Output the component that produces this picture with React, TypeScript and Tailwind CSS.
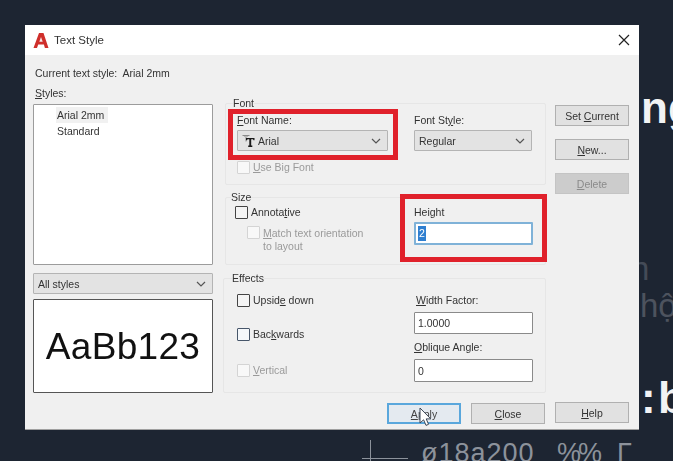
import React from "react";

const Chevron = () => (
  <svg width="10" height="6" viewBox="0 0 10 6" fill="none" stroke="#555" strokeWidth="1.2"><path d="M1 1l4 4 4-4" /></svg>
);

const FontIcon = () => (
  <svg width="13" height="12" viewBox="0 0 13 12" className="mr-[3px] shrink-0">
    <path d="M0.5 0.5h7M2.5 0.5v1M5.5 0.5v1M4 0.5v6" stroke="#8a8a8a" strokeWidth="1" fill="none" />
    <path d="M4 3h8.5v2.2h-1L11 4.2H9.2V10.5h1.1V12H6.2v-1.5h1.1V4.2H5.5L5 5.2H4z" fill="#1a1a1a" />
  </svg>
);

function Check({ disabled, accent, className }: { disabled?: boolean; accent?: boolean; className?: string }) {
  return (
    <span
      className={`block w-[13px] h-[13px] shrink-0 rounded-[1px] border ${
        disabled ? "border-[#d4d4d4] bg-[#f8f8f8]" : accent ? "border-[#47566a] bg-[#f4f7fa]" : "border-[#444] bg-[#f4f4f4]"
      } ${className ?? ""}`}
    />
  );
}

function Select({ className, children }: { className: string; children: React.ReactNode }) {
  return (
    <div className={`flex items-center justify-between pl-[4px] pr-[6px] bg-[#e3e3e3] border border-[#b4b4b4] rounded-[1px] ${className}`}>
      <div className="flex items-center text-[#333]">{children}</div>
      <Chevron />
    </div>
  );
}

function Btn({ children, className, disabled, focus }: { children: React.ReactNode; className?: string; disabled?: boolean; focus?: boolean }) {
  return (
    <div
      className={`relative flex items-center justify-center w-[74px] h-[21px] ${
        disabled
          ? "border bg-[#cccccc] border-[#c4c4c4] text-[#8a8a8a]"
          : focus
          ? "bg-[#e4eaf0] border-2 border-[#5aa7dc] text-[#444]"
          : "border bg-[#e1e1e1] border-[#b0b0b0] text-[#333]"
      } ${className ?? ""}`}
    >
      <span className="whitespace-pre">{children}</span>
    </div>
  );
}

function Input({ value, className }: { value: string; className?: string }) {
  return (
    <div className={`flex items-center pl-[3px] bg-white border border-[#8a8a8a] rounded-[1px] w-[119px] text-[#333] ${className ?? ""}`}>
      {value}
    </div>
  );
}

function Group({ label, className, children, labelClass }: { label: string; className: string; children: React.ReactNode; labelClass?: string }) {
  return (
    <div className={`relative border border-[#e6e6e6] rounded-[2px] ${className}`}>
      <span className={`absolute -top-[8px] bg-[#f0f0f0] leading-[14px] text-[#333] ${labelClass ?? "left-[7px]"}`}>{label}</span>
      {children}
    </div>
  );
}

export default function App() {
  return (
    <div
      className="relative w-[673px] h-[461px] overflow-hidden bg-[#1d2532]"
      style={{ fontFamily: '"Liberation Sans", Arial, sans-serif' }}
    >
      {/* slide content behind the dialog */}
      <div className="absolute left-[641px] top-[85px] text-[44px] leading-[46px] font-semibold text-[#f2f3f4] whitespace-nowrap">ng</div>
      <div className="absolute left-[631px] top-[250px] text-[33px] leading-[38px] text-[#444b57]">n</div>
      <div className="absolute left-[640px] top-[287px] text-[33px] leading-[38px] text-[#4d535e] whitespace-nowrap">hộ</div>
      <div className="absolute left-[641px] top-[375px] text-[44px] leading-[46px] font-semibold text-[#f2f3f4] whitespace-nowrap [word-spacing:-10px]">: b</div>
      <div className="absolute left-[421px] top-[437px] flex text-[27px] leading-[32px] text-[#8c929b] whitespace-nowrap">
        <span className="w-[136px] tracking-[1px]">ø18a200</span>
        <span className="w-[60px] tracking-[-3px]">%%</span>
        <span>Γ</span>
      </div>
      <div className="absolute left-[362px] top-[458px] w-[46px] h-[1px] bg-[#8c929b]" />
      <div className="absolute left-[370px] top-[440px] w-[1px] h-[21px] bg-[#8c929b]" />

      {/* dialog */}
      <div className="absolute left-[25px] top-[25px] w-[614px] h-[405px] flex flex-col bg-[#f0f0f0] border-b border-[#a0a0a0] text-[10.5px] leading-[14px] text-[#333] blur-[0.4px]">
        <div className="flex items-center h-[30px] bg-white pl-[8px] pr-[9px] shrink-0">
          <svg width="16" height="17" viewBox="0 0 16 17" className="shrink-0">
            <path d="M0.5 16L6 1h4.5l5 15h-3.6l-1-3.4H5.2L4 16z" fill="#cf2f2b" />
            <path d="M6.3 9.8h3.4L8 5z" fill="#f6eaea" />
          </svg>
          <span className="ml-[5px] text-[11.5px] text-[#333]">Text Style</span>
          <svg width="12" height="12" viewBox="0 0 12 12" className="ml-auto" stroke="#222" strokeWidth="1.2"><path d="M1 1l10 10M11 1L1 11" /></svg>
        </div>

        <div className="flex flex-1 pl-[8px] pr-[10px]">
          {/* left */}
          <div className="w-[180px] shrink-0 flex flex-col pt-[11px]">
            <div className="pl-[2px]">Current text style:&nbsp; Arial 2mm</div>
            <div className="pl-[2px] mt-[6px]"><u>S</u>tyles:</div>
            <div className="mt-[4px] h-[161px] bg-white border border-[#9c9c9c] rounded-[1px] pl-[22px] pt-[2px]">
              <div className="w-[52px] h-[16px] bg-[#f1f1f1] flex items-center pl-[1px] whitespace-nowrap">Arial 2mm</div>
              <div className="h-[16px] flex items-center pl-[1px]">Standard</div>
            </div>
            <Select className="mt-[8px] h-[21px]">All styles</Select>
            <div className="mt-[5px] h-[94px] bg-white border border-[#555] rounded-[1px] flex items-center justify-center text-[37px] leading-none text-[#111] tracking-[0.3px]">
              AaBb123
            </div>
          </div>

          {/* middle */}
          <div className="ml-[12px] w-[321px] shrink-0 flex flex-col pt-[48px]">
            <Group label="Font" className="h-[82px] flex flex-col pl-[11px] pt-[9px]">
              <div className="flex">
                <div className="w-[177px]">
                  <div><u>F</u>ont Name:</div>
                  <Select className="mt-[3px] w-[151px] h-[21px]">
                    <FontIcon />
                    Arial
                  </Select>
                </div>
                <div>
                  <div>Font St<u>y</u>le:</div>
                  <Select className="mt-[3px] w-[118px] h-[21px]">Regular</Select>
                </div>
              </div>
              <div className="flex items-center mt-[9px] text-[#9a9a9a]">
                <Check disabled />
                <span className="ml-[3px]"><u>U</u>se Big Font</span>
              </div>
            </Group>

            <Group label="Size" className="mt-[12px] h-[68px] flex pl-[9px] pt-[7px]" labelClass="left-[5px]">
              <div className="w-[179px]">
                <div className="flex items-center">
                  <Check />
                  <span className="ml-[3px]">Annota<u>t</u>ive</span>
                </div>
                <div className="flex mt-[7px] ml-[12px] text-[#9a9a9a]">
                  <Check disabled />
                  <span className="ml-[3px] pt-[1px] leading-[13px]"><u>M</u>atch text orientation<br />to layout</span>
                </div>
              </div>
              <div>
                <div>Height</div>
                <div className="mt-[3px] flex items-center pl-[2px] w-[119px] h-[23px] bg-white border-2 border-[#7fb2d8] rounded-[1px]">
                  <span className="bg-[#2f7fd0] text-white px-[1px] leading-[15px]">2</span>
                </div>
              </div>
            </Group>

            <Group label="Effects" className="mt-[13px] -ml-[2px] w-[323px] h-[115px] flex pl-[13px] pt-[10px]" labelClass="left-[8px]">
              <div className="w-[177px] flex flex-col pt-[4px]">
                <div className="flex items-center">
                  <Check />
                  <span className="ml-[3px]">Upsid<u>e</u> down</span>
                </div>
                <div className="flex items-center mt-[20px]">
                  <Check accent />
                  <span className="ml-[3px]">Bac<u>k</u>wards</span>
                </div>
                <div className="flex items-center mt-[22px] text-[#9a9a9a]">
                  <Check disabled />
                  <span className="ml-[3px]"><u>V</u>ertical</span>
                </div>
              </div>
              <div className="pt-[4px]">
                <div className="pl-[2px]"><u>W</u>idth Factor:</div>
                <Input value="1.0000" className="mt-[5px] h-[22px]" />
                <div className="mt-[6px]"><u>O</u>blique Angle:</div>
                <Input value="0" className="mt-[5px] h-[23px]" />
              </div>
            </Group>

            <div className="flex justify-end gap-[10px] mt-[10px] pr-[1px]">
              <Btn focus><u>A</u>pply</Btn>
              <Btn><u>C</u>lose</Btn>
            </div>
          </div>

          {/* right */}
          <div className="ml-[9px] flex flex-col pt-[50px] gap-[13px] flex-1">
            <Btn>Set <u>C</u>urrent</Btn>
            <Btn><u>N</u>ew...</Btn>
            <Btn disabled><u>D</u>elete</Btn>
            <Btn className="mt-[195px]"><u>H</u>elp</Btn>
          </div>
        </div>
      </div>

      {/* red annotation frames */}
      <div className="absolute left-[228px] top-[109px] w-[170px] h-[51px] border-[5px] border-[#e0212b]" />
      <div className="absolute left-[400px] top-[194px] w-[147px] h-[68px] border-[5px] border-[#e0212b]" />

      {/* mouse cursor */}
      <svg className="absolute left-[419px] top-[407px]" width="13" height="20" viewBox="0 0 13 20">
        <path d="M1 1v15l3.6-3.2 2.4 5.6 2.6-1.1-2.4-5.4h4.6z" fill="#fff" stroke="#3a4656" strokeWidth="1" />
      </svg>
    </div>
  );
}
